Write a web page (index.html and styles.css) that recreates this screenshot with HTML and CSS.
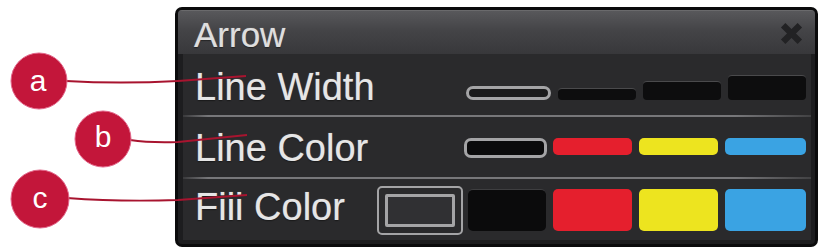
FILE: index.html
```html
<!DOCTYPE html>
<html lang="en">
<head>
    <meta charset="UTF-8">
    <meta name="viewport" content="width=device-width, initial-scale=1.0">
    <link rel="stylesheet" href="styles.css">
</head>
<body>
    <div class="stage">
        <div class="panel">
            <div class="title-bar">
                <span class="title">Arrow</span>
                <svg class="close" viewBox="0 0 24 24">
                    <path d="M4 4L20 20M20 4L4 20" />
                </svg>
            </div>
            <div class="content">
                <div class="row row-width">
                    <div class="label">Line Width</div>
                    <div class="swatches widths">
                        <div class="sw w1 selected"></div>
                        <div class="sw w2"></div>
                        <div class="sw w3"></div>
                        <div class="sw w4"></div>
                    </div>
                </div>
                <div class="sep"></div>
                <div class="row row-line">
                    <div class="label">Line Color</div>
                    <div class="swatches lines">
                        <div class="sw black selected"></div>
                        <div class="sw red"></div>
                        <div class="sw yellow"></div>
                        <div class="sw blue"></div>
                    </div>
                </div>
                <div class="sep"></div>
                <div class="row row-fill">
                    <div class="label">Fiii Color</div>
                    <div class="swatches fills">
                        <div class="sw none selected"><div class="none-inner"></div></div>
                        <div class="sw black"></div>
                        <div class="sw red"></div>
                        <div class="sw yellow"></div>
                        <div class="sw blue"></div>
                    </div>
                </div>
            </div>
        </div>

        <!-- callouts -->
        <svg class="callouts" viewBox="0 0 823 251">
            <path class="leader" d="M66 81 Q120 84 178 81 L246 76" />
            <path class="leader" d="M130 140 Q150 143 178 142 L247 135" />
            <path class="leader" d="M67 198 Q120 202 178 200 L247 195" />
            <circle class="dot" cx="39" cy="81" r="28" />
            <circle class="dot" cx="103" cy="139" r="28" />
            <circle class="dot" cx="40" cy="199" r="29" />
            <text x="38" y="91">a</text>
            <text x="103" y="147">b</text>
            <text x="40" y="208">c</text>
        </svg>
    </div>
</body>
</html>
```
FILE: styles.css
```css
body {
    margin: 0;
    background: #fff;
    font-family: 'Liberation Sans', Arial, sans-serif;
}
.stage {
    position: relative;
    width: 823px;
    height: 251px;
    padding: 7px 0 0 175px;
    box-sizing: border-box;
}
.panel {
    width: 643px;
    height: 240px;
    box-sizing: border-box;
    border: 3px solid #0b0b0c;
    border-radius: 7px;
    background: #1d1d1f;
    display: flex;
    flex-direction: column;
    overflow: hidden;
}
.title-bar {
    height: 43px;
    flex: none;
    display: flex;
    align-items: center;
    justify-content: space-between;
    padding: 0 11px 0 16px;
    background: linear-gradient(180deg, #58585b 0%, #444447 45%, #38383b 100%);
    border-top: 1px solid #6a6a6c;
}
.title {
    color: #dedede;
    font-size: 35px;
    line-height: 43px;
    padding-top: 3px;
    text-shadow: 0 0 1px rgba(255,255,255,0.5), 0 1px 1px rgba(0,0,0,0.6);
}
.close {
    width: 25px;
    height: 25px;
    margin-top: 2px;
}
.close path {
    stroke: #222224;
    stroke-width: 6;
    fill: none;
}
.content {
    flex: 1;
    margin: 0 4px 4px 5px;
    background: #2a2a2c;
    display: flex;
    flex-direction: column;
}
.row {
    display: flex;
    align-items: center;
    padding: 0 5px 0 12px;
}
.row-width {
    height: 61px;
    padding-top: 5px;
    box-sizing: border-box;
}
.row-line {
    height: 60px;
    padding-top: 2px;
    box-sizing: border-box;
}
.row-fill {
    flex: 1;
    padding-top: 1px;
}
.label {
    flex: 1;
    color: #e6e6e6;
    font-size: 38px;
    line-height: 38px;
    text-shadow: 0 0 1px rgba(255,255,255,0.5), 0 1px 1px rgba(0,0,0,0.7);
}
.row-fill .label {
    margin-bottom: 6px;
}
.sep {
    height: 2px;
    flex: none;
    background: linear-gradient(90deg, rgba(120,120,122,0.2) 0%, #77777a 4%, #77777a 88%, rgba(120,120,122,0.3) 100%);
}
.swatches {
    display: flex;
    gap: 7px;
}
.widths {
    align-items: flex-end;
    height: 25px;
}
.sw {
    box-sizing: border-box;
    border-radius: 4px;
}
.sw.selected {
    border: 3px solid #a4a4a6;
}
.widths .sw {
    width: 78px;
    background: #0d0d0e;
    border-top: 1px solid #4a4a4c;
}
.widths .w1 {
    width: 85px;
    height: 14px;
    background: #1a1a1b;
    border: 3px solid #a4a4a6;
    border-radius: 8px;
}
.widths .w2 { height: 12px; }
.widths .w3 { height: 19px; }
.widths .w4 { height: 25px; }
.lines .sw {
    width: 79px;
    height: 17px;
    border-radius: 5px;
}
.lines .black {
    width: 83px;
    height: 20px;
    border-radius: 7px;
    margin-right: -1px;
}
.lines .blue {
    width: 81px;
}
.fills {
    align-items: center;
}
.fills .sw {
    width: 79px;
    height: 42px;
    border-radius: 5px;
}
.fills .black {
    width: 78px;
    border-top: 1px solid #3e3e40;
}
.fills .blue {
    width: 81px;
}
.fills .none {
    width: 86px;
    height: 49px;
    border-width: 2px;
    padding: 6px;
    margin-right: -2px;
    background: #2a2a2c;
}
.none-inner {
    height: 100%;
    box-sizing: border-box;
    border: 3px solid #a4a4a6;
    border-radius: 2px;
    background: #303033;
}
.black { background: #0b0b0c; }
.red { background: #e51f2d; }
.yellow { background: #ede41f; }
.blue { background: #3aa3e3; }

.callouts {
    position: absolute;
    top: 0;
    left: 0;
    width: 823px;
    height: 251px;
}
.leader {
    fill: none;
    stroke: #a8142f;
    stroke-width: 1.8;
}
.dot {
    fill: #c3163a;
    stroke: #e2678a;
    stroke-width: 1;
}
.callouts text {
    fill: #fff;
    font-family: 'Liberation Sans', Arial, sans-serif;
    font-size: 30px;
    text-anchor: middle;
}
```
